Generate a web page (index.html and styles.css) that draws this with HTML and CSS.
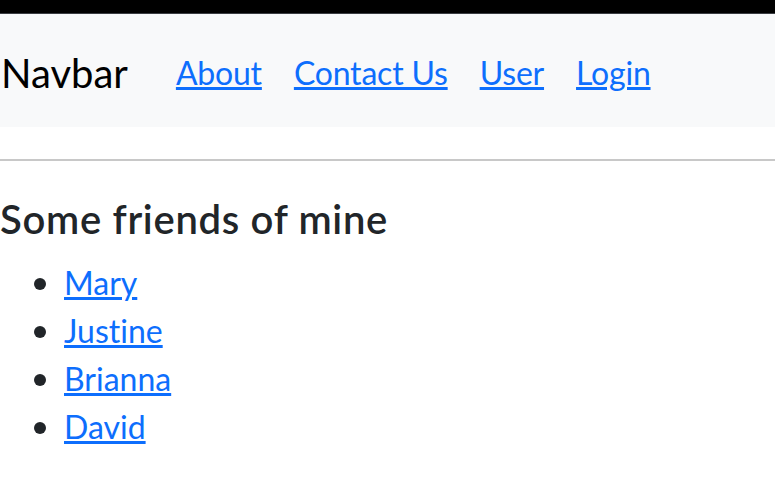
FILE: index.html
```html
<!DOCTYPE html>
<html lang="en">
<head>
<meta charset="utf-8">
<title>Navbar</title>
<link rel="stylesheet" href="styles.css">
</head>
<body>
<div class="topbar"></div>
<nav class="navbar">
  <a class="brand" href="#">Navbar</a>
  <a class="nav-link" href="#">About</a>
  <a class="nav-link" href="#">Contact Us</a>
  <a class="nav-link" href="#">User</a>
  <a class="nav-link" href="#">Login</a>
</nav>
<hr class="rule">
<main class="content">
  <h3 class="title">Some friends of mine</h3>
  <ul class="friends">
    <li><a href="#">Mary</a></li>
    <li><a href="#">Justine</a></li>
    <li><a href="#">Brianna</a></li>
    <li><a href="#">David</a></li>
  </ul>
</main>
</body>
</html>
```

FILE: styles.css
```css
html, body {
  margin: 0;
  padding: 0;
  background: #fff;
}
body {
  font-family: Lato, "Open Sans", sans-serif;
  font-variant-ligatures: none;
  color: #212529;
}
.topbar {
  height: 13px;
  background: #000;
  border-bottom: 1px solid #3a3d42;
}
.navbar {
  display: flex;
  align-items: center;
  background: #f8f9fa;
  height: 113px;
  box-sizing: border-box;
  padding: 19px 0 15px;
}
.brand {
  font-size: 40px;
  color: #000;
  text-decoration: none;
  margin-right: 32px;
  padding-left: 1px;
}
.nav-link {
  font-size: 32px;
  color: #0d6efd;
  padding: 0 16px;
  text-decoration-thickness: 3px;
  letter-spacing: -0.2px;
}
.rule {
  margin: 32px 0 0;
  border: 0;
  border-top: 2px solid #c8c8c8;
}
.content {
  padding-top: 34px;
}
.title {
  margin: 0 0 16px;
  font-size: 40px;
  line-height: 48px;
  font-weight: 600;
  letter-spacing: 0.7px;
}
.friends {
  margin: 0;
  padding-left: 64px;
  list-style: none;
}
.friends li {
  font-size: 32px;
  line-height: 48px;
}
.friends li::before {
  content: "";
  display: inline-block;
  width: 12px;
  height: 12px;
  border-radius: 50%;
  background: #212529;
  margin-left: -30px;
  margin-right: 18px;
  vertical-align: 5px;
}
.friends a {
  color: #0d6efd;
  text-decoration-thickness: 3px;
}
```
